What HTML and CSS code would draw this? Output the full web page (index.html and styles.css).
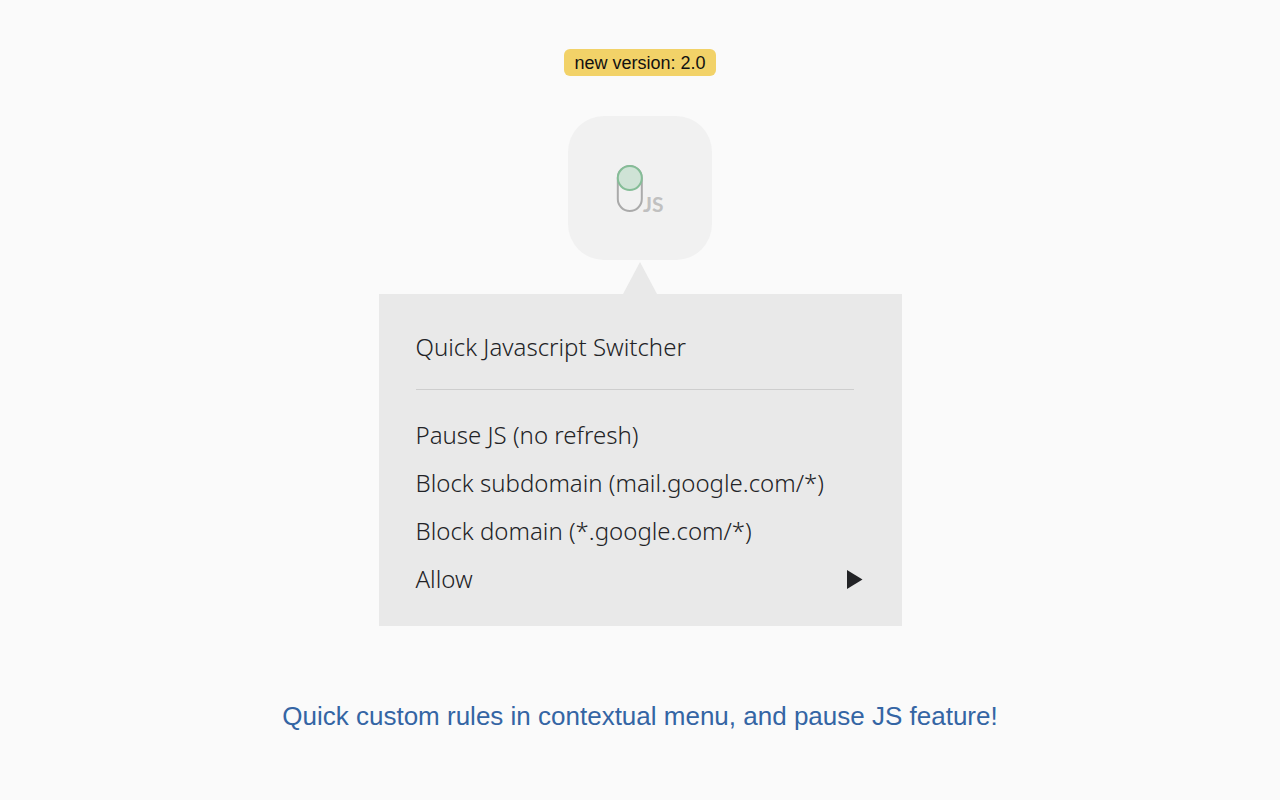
FILE: index.html
```html
<!DOCTYPE html>
<html lang="en">
<head>
    <meta charset="UTF-8">
    <meta name="viewport" content="width=device-width, initial-scale=1.0">
    <title>Quick Javascript Switcher</title>
    <link rel="stylesheet" href="styles.css">
</head>
<body>
    <main class="promo">
        <span class="version">new version: 2.0</span>

        <div class="app-icon">
            <svg width="144" height="144" viewBox="0 0 144 144" role="img" aria-label="JS switch">
                <rect x="49.8" y="50" width="24" height="45" rx="12" fill="none" stroke="#aaaaaa" stroke-width="2"/>
                <circle cx="61.8" cy="62" r="12" fill="#cfe3d6" stroke="#85bd97" stroke-width="2"/>
                <text x="75" y="96" class="icon-label">JS</text>
            </svg>
        </div>

        <svg class="pointer" width="34" height="32" viewBox="0 0 34 32" aria-hidden="true">
            <path d="M17 0 L34 32 H0 Z" fill="#e9e9e9"/>
        </svg>

        <div class="menu">
            <h1 class="menu-title">Quick Javascript Switcher</h1>
            <hr class="divider">
            <button type="button" class="menu-item">Pause JS (no refresh)</button>
            <button type="button" class="menu-item">Block subdomain (mail.google.com/*)</button>
            <button type="button" class="menu-item">Block domain (*.google.com/*)</button>
            <button type="button" class="menu-item" aria-haspopup="true">
                Allow
                <svg width="16" height="20" viewBox="0 0 16 20" aria-hidden="true">
                    <path d="M0 1 L15.5 10.5 L0 20 Z" fill="#222326"/>
                </svg>
            </button>
        </div>

        <p class="tagline">Quick custom rules in contextual menu, and pause JS feature!</p>
    </main>
</body>
</html>
```

FILE: styles.css
```css
body {
    margin: 0;
    background-color: #fafafa;
    font-family: "Liberation Sans", Arial, sans-serif;
}

.promo {
    display: flex;
    flex-direction: column;
    align-items: center;
    padding: 49px 16px 40px;
}

.version {
    padding: 1px 10px 0;
    border-radius: 6px;
    background-color: #f2d268;
    color: #111;
    font-size: 18px;
    line-height: 26px;
}

.app-icon {
    margin-top: 40px;
    border-radius: 36px;
    background-color: #f1f1f1;
}

.app-icon svg {
    display: block;
}

.icon-label {
    fill: #c0c0c0;
    font-family: Lato, sans-serif;
    font-size: 21px;
    font-weight: 700;
}

.pointer {
    display: block;
    margin-top: 2px;
}

.menu {
    box-sizing: border-box;
    width: 100%;
    max-width: 523px;
    padding: 29px 39px 23px 37px;
    background-color: #e9e9e9;
    color: #222326;
    font-family: "Noto Sans", "Segoe UI", sans-serif;
}

.menu-title {
    margin: 0;
    font-size: 24px;
    font-weight: 300;
    line-height: 48px;
}

.divider {
    height: 1px;
    margin: 18px 9px 21px 0;
    border: none;
    background-color: #cecece;
}

.menu-item {
    display: flex;
    justify-content: space-between;
    align-items: center;
    width: 100%;
    padding: 0;
    border: none;
    background: none;
    color: inherit;
    font-family: inherit;
    font-size: 24px;
    font-weight: 300;
    line-height: 48px;
    text-align: left;
    cursor: pointer;
}

.tagline {
    margin: 74px 0 0;
    color: #3465a4;
    font-size: 26px;
    line-height: 32px;
    text-align: center;
}
```
